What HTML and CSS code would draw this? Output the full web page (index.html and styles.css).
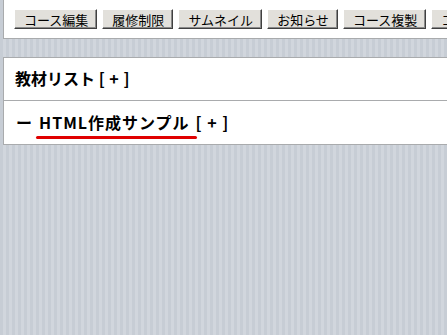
FILE: index.html
```html
<!DOCTYPE html>
<html lang="ja">
<head>
    <meta charset="UTF-8">
    <meta name="viewport" content="width=device-width, initial-scale=1.0">
    <title>教材リスト</title>
    <link rel="stylesheet" href="styles.css">
</head>
<body>
    <div class="panel toolbar">
        <button>コース編集</button>
        <button>履修制限</button>
        <button>サムネイル</button>
        <button>お知らせ</button>
        <button>コース複製</button>
        <button>コース削除</button>
    </div>

    <div class="panel list">
        <div class="row">教材リスト <span class="add">[ + ]</span></div>
        <div class="row">
            <span class="dash">ー</span>
            <a class="item" href="#">HTML作成サンプル</a>
            <span class="add">[ + ]</span>
        </div>
    </div>
</body>
</html>
```

FILE: styles.css
```css
html, body {
    margin: 0;
    padding: 0;
    overflow: hidden;
}

body {
    font-family: "Noto Sans CJK JP", "DejaVu Sans", sans-serif;
    padding-left: 3px;
    height: 335px;
    background-color: #cbd0d8;
    background-image: repeating-linear-gradient(90deg, #c7cdd5 0, #c7cdd5 3px, #d1d6dd 3px, #d1d6dd 6px);
}

.panel {
    width: 480px;
    background: #ffffff;
    border: 1px solid #a9abad;
}

.toolbar {
    border-top: none;
    display: flex;
    gap: 5px;
    padding: 9px 10px 9px 10px;
    white-space: nowrap;
}

.toolbar button {
    flex: none;
    font-family: "Noto Sans CJK JP", sans-serif;
    font-size: 13px;
    line-height: 16px;
    color: #000;
    background: #e2e0db;
    padding: 1px 8px 0 9px;
    height: 20px;
    border: 1px solid;
    border-color: #ffffff #404040 #404040 #ffffff;
    box-shadow: inset -1px -1px 0 #8a8a8a;
}

.list {
    margin-top: 18px;
}

.row {
    display: flex;
    align-items: center;
    padding: 0 11px 3px 11px;
    font-size: 16px;
    font-weight: bold;
    color: #000;
    height: 39px;
    white-space: pre;
}

.row + .row {
    border-top: 1px solid #a9abad;
    padding-bottom: 2px;
    height: 41px;
}

.add {
    word-spacing: 1px;
}

.row + .row .add {
    word-spacing: 2px;
    margin-left: 2px;
}

.dash {
    margin: 0 7px 0 1px;
}

.item {
    position: relative;
    color: #000;
    text-decoration: none;
    letter-spacing: 1px;
    margin-right: 4px;
}

.item::after {
    content: "";
    position: absolute;
    left: -3px;
    right: -7px;
    bottom: -5px;
    height: 3px;
    border-radius: 2px;
    background: #e00000;
}
```
